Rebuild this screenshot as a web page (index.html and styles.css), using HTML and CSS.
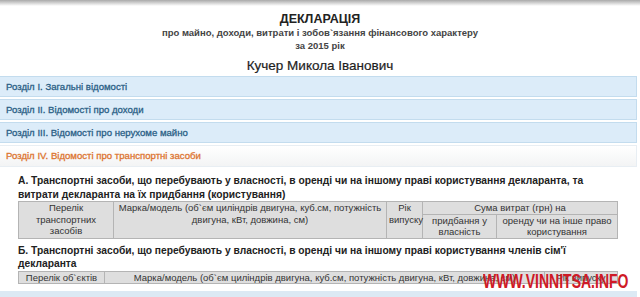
FILE: index.html
```html
<!DOCTYPE html>
<html>

<head>
    <title>Декларація</title>
    <meta charset=utf-8>
    <meta name=viewport content="width=device-width, initial-scale=1">
    <link rel="stylesheet" href="styles.css">
</head>

<body>
    <div class="shade"></div>
    <div class="decl">
        <h1>ДЕКЛАРАЦІЯ</h1>
        <p class="sub">про майно, доходи, витрати і зобов`язання фінансового характеру</p>
        <p class="sub">за 2015 рік</p>
        <h2>Кучер Микола Іванович</h2>
    </div>

    <div class="acc">
        <div class="acc-head">Розділ I. Загальні відомості</div>
        <div class="acc-head">Розділ II. Відомості про доходи</div>
        <div class="acc-head">Розділ III. Відомості про нерухоме майно</div>
        <div class="acc-head active">Розділ IV. Відомості про транспортні засоби</div>
        <div class="acc-body">
            <h3>А. Транспортні засоби, що перебувають у власності, в оренді чи на іншому праві користування декларанта, та витрати декларанта на їх придбання (користування)</h3>
            <table class="grid">
                <colgroup>
                    <col class="c1">
                    <col class="c2">
                    <col class="c3">
                    <col class="c4">
                    <col>
                </colgroup>
                <tr>
                    <th rowspan="2">Перелік транспортних засобів</th>
                    <th rowspan="2">Марка/модель (об`єм циліндрів двигуна, куб.см, потужність двигуна, кВт, довжина, см)</th>
                    <th rowspan="2">Рік випуску</th>
                    <th colspan="2">Сума витрат (грн) на</th>
                </tr>
                <tr>
                    <th>придбання у власність</th>
                    <th>оренду чи на інше право користування</th>
                </tr>
            </table>

            <h3>Б. Транспортні засоби, що перебувають у власності, в оренді чи на іншому праві користування членів сім'ї декларанта</h3>
            <table class="grid">
                <colgroup>
                    <col class="b1">
                    <col class="b2">
                    <col>
                </colgroup>
                <tr>
                    <th>Перелік об`єктів</th>
                    <th>Марка/модель (об`єм циліндрів двигуна, куб.см, потужність двигуна, кВт, довжина, см)</th>
                    <th>Рік випуску</th>
                </tr>
            </table>
        </div>
        <div class="acc-foot"></div>
    </div>

    <div class="mark">WWW.VINNITSA.INFO</div>
</body>

</html>
```

FILE: styles.css
```css
body {
    margin: 0;
    font-family: "Liberation Sans", Arial, sans-serif;
    background: white;
    color: #222;
    position: relative;
    overflow: hidden;
}

.shade {
    height: 6px;
    background: linear-gradient(#a9a9a9, #fff);
}

.decl {
    text-align: center;
    padding-top: 6px;
}

.decl h1 {
    margin: 0;
    font-size: 12.5px;
    line-height: 14px;
}

.decl .sub {
    margin: 0;
    font-size: 9.5px;
    line-height: 13px;
    font-weight: bold;
    color: #444;
}

.decl h2 {
    margin: 6px 0 0;
    font-size: 13.5px;
    line-height: 16px;
    font-weight: normal;
    color: #1e1e1e;
    -webkit-text-stroke: 0.2px #1e1e1e;
}

.acc {
    padding-right: 3px;
}

.acc-head {
    height: 19px;
    line-height: 19px;
    margin-top: 2px;
    padding-left: 6px;
    border: 1px solid #c3dcee;
    border-left: none;
    background: #dcecf9;
    color: #2b5f86;
    font-size: 9.6px;
    -webkit-text-stroke: 0.3px #2b5f86;
}

.acc-head.active {
    height: 20px;
    line-height: 20px;
    border-color: #e8eef3;
    background: linear-gradient(#ffffff, #f3f4f5);
    color: #dd7531;
    -webkit-text-stroke: 0.3px #dd7531;
}

.acc-body {
    padding: 7px 19px 0 18px;
}

.acc-body h3 {
    margin: 0;
    font-size: 10.25px;
    line-height: 13.5px;
    color: #222;
}

.grid {
    width: 100%;
    border-collapse: collapse;
    table-layout: fixed;
    margin-bottom: 5px;
}

.grid th {
    background: #dedede;
    border: 1px solid #b4b4b4;
    font-size: 9.5px;
    line-height: 11.5px;
    font-weight: normal;
    color: #333;
    padding: 0 2px;
    vertical-align: top;
}

.grid .c1 { width: 95px; }
.grid .c2 { width: 273px; }
.grid .c3 { width: 36px; }
.grid .c4 { width: 74px; }
.grid .b1 { width: 86px; }
.grid .b2 { width: 440px; }

.acc-foot {
    height: 8px;
    margin-top: 7px;
    background: #dce9f4;
}

.mark {
    position: absolute;
    left: 483px;
    top: 270px;
    font-size: 20px;
    font-weight: bold;
    color: #cf1a26;
    transform: scaleX(0.7);
    transform-origin: left top;
    white-space: nowrap;
}
```
